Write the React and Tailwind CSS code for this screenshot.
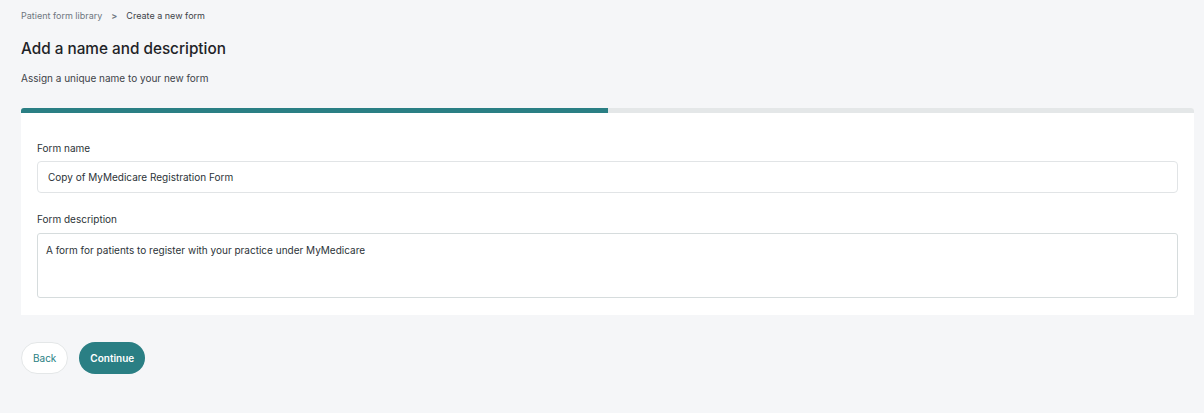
import React, { useState } from 'react';

const App = () => {
  const [name, setName] = useState('Copy of MyMedicare Registration Form');
  const [description, setDescription] = useState('A form for patients to register with your practice under MyMedicare');

  return (
    <div className="min-h-[413px] bg-[#f5f6f8] px-[21px] pt-[10px] font-['Inter',sans-serif] text-[#2c3338]">
      {/* Breadcrumb */}
      <nav className="flex items-center text-[9px] leading-[12px]">
        <span className="text-[#6f7680]">Patient form library</span>
        <span className="mx-[9px] font-semibold text-[#6f7680]">&gt;</span>
        <span className="text-[#3d4349]">Create a new form</span>
      </nav>

      <h1 className="mt-[17px] text-[15.3px] font-medium leading-[20px] text-[#1e2327]">Add a name and description</h1>
      <p className="mt-[12px] text-[10px] leading-[14px] text-[#3d4349]">Assign a unique name to your new form</p>

      {/* Card */}
      <div className="mt-[23px] mr-[-11px] overflow-hidden rounded-tl-[3px] rounded-tr-[3px] bg-white">
        <div className="flex h-[5px] bg-[#e4e7e8]">
          <div className="w-1/2 bg-[#2a7f84]" />
        </div>
        <div className="px-[16px] pb-[17px] pt-[28px]">
          <label className="block text-[10px] leading-[14px] text-[#2c3338]">Form name</label>
          <input
            value={name}
            onChange={(e) => setName(e.target.value)}
            className="mt-[6px] block h-[32px] w-full rounded-[4px] border border-[#e1e4e6] px-[10px] text-[10px] text-[#2c3338] outline-none"
          />
          <label className="mt-[19px] block text-[10px] leading-[14px] text-[#2c3338]">Form description</label>
          <textarea
            value={description}
            onChange={(e) => setDescription(e.target.value)}
            className="mt-[7px] block h-[65px] w-full resize-none rounded-[3px] border border-[#d6dcdd] px-[8px] pt-[9px] text-[10px] leading-[14px] text-[#2c3338] outline-none"
          />
        </div>
      </div>

      {/* Actions */}
      <div className="mt-[27px] flex items-center gap-[11px]">
        <button className="h-[32px] rounded-full border border-[#e4e7e8] bg-white px-[11px] text-[10px] text-[#2a7f84]">Back</button>
        <button className="h-[32px] rounded-full bg-[#2a7f84] px-[11px] text-[10px] font-semibold text-white">Continue</button>
      </div>
    </div>
  );
};

export default App;
